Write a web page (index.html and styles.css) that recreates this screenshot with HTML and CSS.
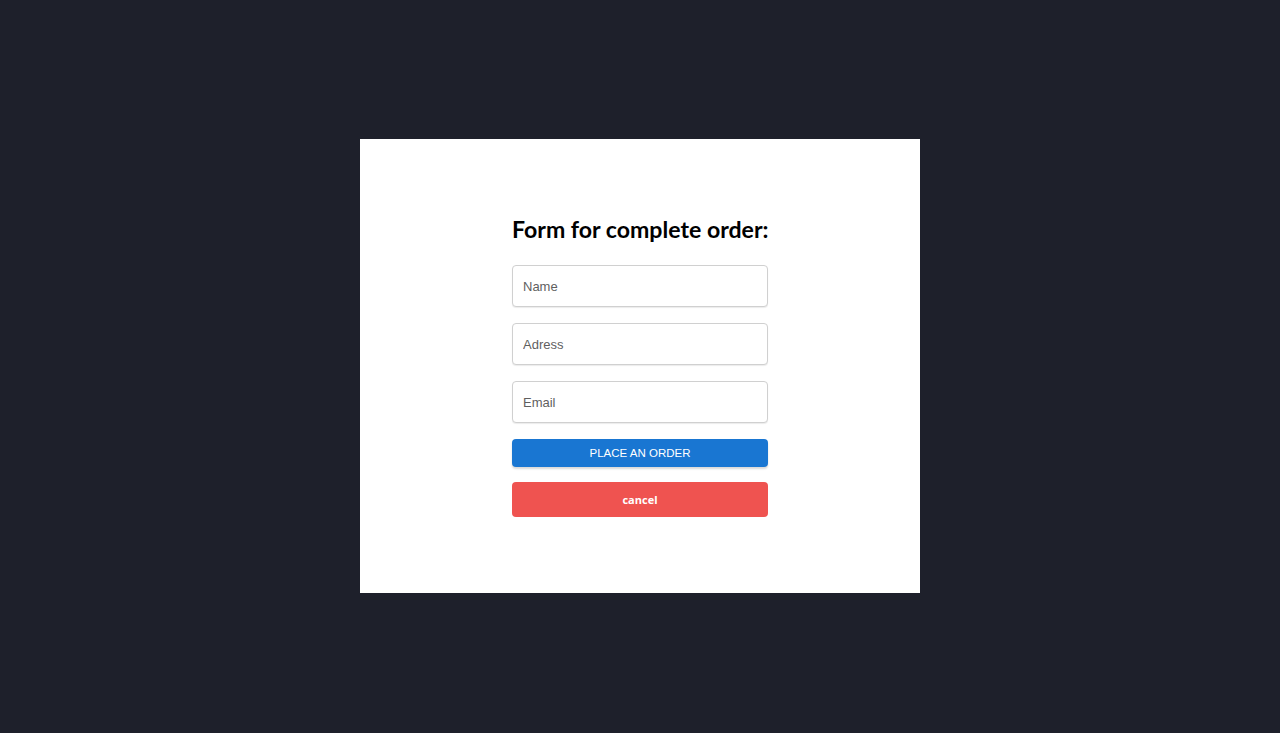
FILE: index.html
```html
<!DOCTYPE html>
<html lang="en">
  <head>
    <title>Complete order</title>
    <link rel="stylesheet" href="styles.css">
  </head>
  <body>
    <div class="modal">
      <form class="order-form">
        <h2>Form for complete order:</h2>
        <input type="text" placeholder="Name" />
        <input type="text" placeholder="Adress" />
        <input type="email" placeholder="Email" />
        <button type="submit" class="btn btn-order">Place an order</button>
        <button type="button" class="btn btn-cancel">cancel</button>
      </form>
    </div>
  </body>
</html>
```

FILE: styles.css
```css
body {
  margin: 0;
  height: 733px;
  display: flex;
  justify-content: center;
  align-items: flex-start;
  background-color: #1e202b;
  font-family: "Liberation Sans", Arial, sans-serif;
}

.modal {
  margin-top: 139px;
  width: 560px;
  height: 454px;
  background: white;
  display: flex;
  justify-content: center;
  box-sizing: border-box;
  padding-top: 75px;
}

.order-form {
  width: 256px;
  display: flex;
  flex-direction: column;
}

h2 {
  font-family: Lato, sans-serif;
  font-weight: bold;
  font-size: 23.1px;
  line-height: 30px;
  margin: 0 0 21px;
  color: #000;
  white-space: nowrap;
}

input {
  height: 42px;
  box-sizing: border-box;
  padding: 0 10px;
  margin-bottom: 16px;
  border: 1px solid #d0d0d0;
  border-radius: 4px;
  box-shadow: 0 1px 1px rgba(0, 0, 0, 0.08);
  font-family: "Liberation Sans", Arial, sans-serif;
  font-size: 13px;
  color: #333;
}

input::placeholder {
  color: #5f5f5f;
}

.btn {
  width: 100%;
  border: none;
  border-radius: 4px;
  color: white;
  cursor: pointer;
}

.btn-order {
  height: 28px;
  background-color: #1976d2;
  font-family: "Liberation Sans", Arial, sans-serif;
  font-size: 11.5px;
  text-transform: uppercase;
  box-shadow: 0 2px 2px rgba(0, 0, 0, 0.15);
  margin-bottom: 15px;
}

.btn-order:hover {
  background-color: #1565c0;
}

.btn-cancel {
  height: 35px;
  background-color: #ef5350;
  font-family: "Open Sans", sans-serif;
  font-weight: bold;
  font-size: 11px;
}
```
